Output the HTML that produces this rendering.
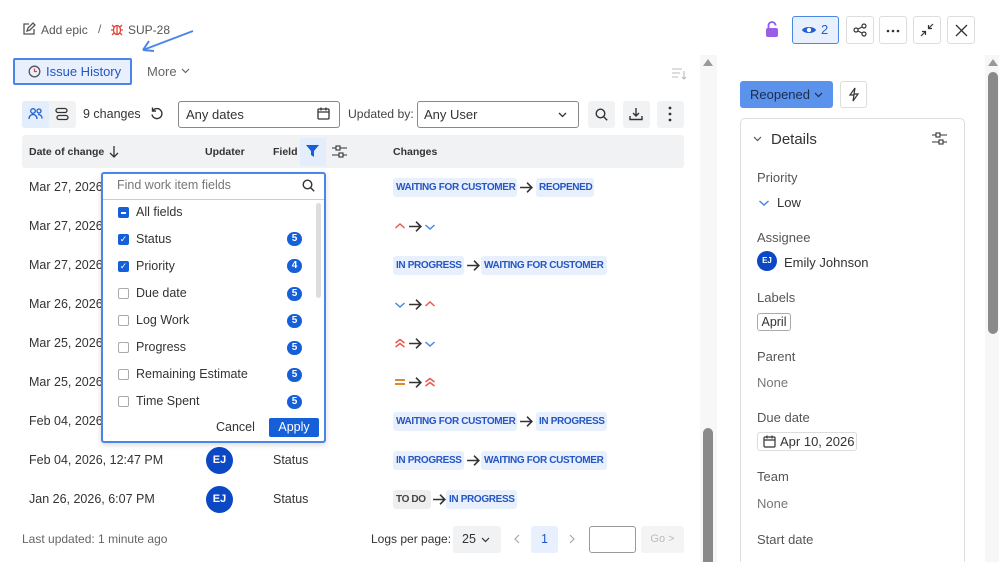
<!DOCTYPE html>
<html><head><meta charset="utf-8"><style>
*{box-sizing:border-box;margin:0;padding:0}
html,body{width:999px;height:562px;overflow:hidden}
body{background:#fff;font-family:"Liberation Sans",Arial,sans-serif;color:#333;position:relative;font-size:12px}
.a{position:absolute}
.tag{position:absolute;background:#e8f0fd;color:#2455c3;font-weight:bold;font-size:10px;letter-spacing:-0.35px;padding:0 3px;height:19px;line-height:19px;border-radius:3px;white-space:nowrap;overflow:hidden}
.tag.g{background:#eee;color:#444}
.arr{position:absolute}
.date{position:absolute;left:29px;font-size:12.5px;color:#333}
.av{position:absolute;width:27px;height:27px;border-radius:50%;background:#0c47c4;color:#fff;font-size:11px;font-weight:bold;text-align:center;line-height:27px}
.it{position:absolute;left:118px;font-size:12.5px;color:#333}
.cb{position:absolute;left:118px;width:11px;height:11px;border:1px solid #aaa;border-radius:2px;background:#fff}
.cb.on{background:#1560d8;border-color:#1560d8}
.bd{position:absolute;left:287px;width:15px;height:14px;border-radius:7px;background:#1560d8;color:#fff;font-size:10px;font-weight:bold;text-align:center;line-height:14px}
.lbl{position:absolute;left:757px;font-size:13px;color:#555}
.val{position:absolute;left:757px;font-size:13px;color:#333}
.btn{position:absolute;border:1px solid #ddd;border-radius:3px;background:#fff;width:27px;height:27px;text-align:center;line-height:25px}
.hd{position:absolute;font-size:10.5px;font-weight:bold;top:146px}
</style></head><body>
<svg width="0" height="0" style="position:absolute"><defs>
<symbol id="ar" viewBox="0 0 14 12"><path d="M1 6h11M7.5 1.5L12 6l-4.5 4.5" fill="none" stroke="#333" stroke-width="1.5"/></symbol>
<symbol id="up" viewBox="0 0 12 8"><path d="M1.5 6L6 2l4.5 4" fill="none" stroke="#e8594f" stroke-width="1.5"/></symbol>
<symbol id="dn" viewBox="0 0 12 8"><path d="M1.5 2L6 6l4.5-4" fill="none" stroke="#4a86e8" stroke-width="1.5"/></symbol>
<symbol id="uu" viewBox="0 0 12 10"><path d="M1.5 5L6 1.5 10.5 5M1.5 9L6 5.5 10.5 9" fill="none" stroke="#e8594f" stroke-width="1.5"/></symbol>
<symbol id="eq" viewBox="0 0 12 10"><path d="M1 3h10M1 7h10" stroke="#e08a2e" stroke-width="2"/></symbol>
</defs></svg>
<!-- breadcrumb -->
<svg class="a" style="left:22px;top:22px" width="14" height="14" viewBox="0 0 14 14"><path d="M7 2H2v10h10V7M5 9l1-3 5-5 2 2-5 5z" fill="none" stroke="#555" stroke-width="1.3"/></svg>
<div class="a" style="left:41px;top:23px;font-size:12px;color:#555">Add epic</div>
<div class="a" style="left:98px;top:22px;font-size:12px;color:#666">/</div>
<svg class="a" style="left:110px;top:22px" width="14" height="14" viewBox="0 0 14 14"><g stroke="#e0443a" stroke-width="1.3" fill="none"><ellipse cx="7" cy="8" rx="3.5" ry="4.5"/><path d="M7 4v8M1 8h2.5M10.5 8H13M2 3l2 2M12 3l-2 2M2 13l2-2M12 13l-2-2"/></g></svg>
<div class="a" style="left:128px;top:23px;font-size:12px;color:#555">SUP-28</div>
<svg class="a" style="left:135px;top:28px" width="62" height="28" viewBox="0 0 62 28"><path d="M58 3L8 22M8 22l11 1M8 22l6-9" fill="none" stroke="#4a86e8" stroke-width="2"/></svg>
<!-- tabs -->
<div class="a" style="left:13px;top:58px;width:119px;height:27px;border:2px solid #4a86e8;border-radius:2px;background:#e8f0fd"></div>
<svg class="a" style="left:28px;top:65px" width="13" height="13" viewBox="0 0 13 13"><circle cx="6.5" cy="6.5" r="5.3" fill="none" stroke="#555" stroke-width="1.3"/><path d="M6.5 3.5v3h2.5" fill="none" stroke="#e0443a" stroke-width="1.2"/></svg>
<div class="a" style="left:46px;top:64px;font-size:13px;color:#2455c3">Issue History</div>
<div class="a" style="left:147px;top:64px;font-size:13px;color:#666">More</div>
<svg class="a" style="left:181px;top:68px" width="9" height="6" viewBox="0 0 9 6"><path d="M1 1l3.5 3.5L8 1" fill="none" stroke="#666" stroke-width="1.2"/></svg>
<svg class="a" style="left:672px;top:68px" width="15" height="12" viewBox="0 0 15 12"><path d="M0 1h10M0 5h8M0 9h6M12 3v8M10 9l2 2 2-2" fill="none" stroke="#bbb" stroke-width="1.1"/></svg>
<!-- toolbar -->
<div class="a" style="left:22px;top:101px;width:54px;height:27px;background:#f1f2f4;border-radius:3px"></div>
<div class="a" style="left:22px;top:101px;width:27px;height:27px;background:#e3edfc;border-radius:3px"></div>
<svg class="a" style="left:28px;top:107px" width="15" height="14" viewBox="0 0 15 14"><g fill="none" stroke="#1f5fd1" stroke-width="1.3"><circle cx="5" cy="4" r="2.3"/><circle cx="11" cy="4" r="2"/><path d="M1 12c0-3 2-4.5 4-4.5s4 1.5 4 4.5M10 7.5c2 0 4 1 4 4"/></g></svg>
<svg class="a" style="left:55px;top:107px" width="14" height="14" viewBox="0 0 14 14"><g fill="none" stroke="#333" stroke-width="1.3"><rect x="1" y="1.5" width="11" height="4" rx="2"/><rect x="2" y="8.5" width="11" height="4" rx="2"/></g></svg>
<div class="a" style="left:83px;top:107px;font-size:12.5px">9 changes</div>
<svg class="a" style="left:150px;top:107px" width="14" height="14" viewBox="0 0 14 14"><path d="M3 3.5A5 5 0 1 1 2 7.5M2.5 0.5v3.5H6" fill="none" stroke="#333" stroke-width="1.4"/></svg>
<div class="a" style="left:178px;top:101px;width:162px;height:27px;border:1px solid #888;border-radius:3px"></div>
<div class="a" style="left:186px;top:107px;font-size:13px">Any dates</div>
<svg class="a" style="left:317px;top:107px" width="13" height="13" viewBox="0 0 13 13"><g fill="none" stroke="#333" stroke-width="1.3"><rect x="1" y="2" width="11" height="10" rx="1"/><path d="M1 5h11M4 0.5v3M9 0.5v3"/></g></svg>
<div class="a" style="left:348px;top:107px;font-size:12.2px;color:#444">Updated by:</div>
<div class="a" style="left:417px;top:101px;width:162px;height:27px;border:1px solid #888;border-radius:3px"></div>
<div class="a" style="left:424px;top:107px;font-size:13px">Any User</div>
<svg class="a" style="left:558px;top:112px" width="9" height="6" viewBox="0 0 9 6"><path d="M1 1l3.5 3.5L8 1" fill="none" stroke="#333" stroke-width="1.3"/></svg>
<div class="a" style="left:588px;top:101px;width:27px;height:27px;background:#f1f2f4;border-radius:3px"></div>
<svg class="a" style="left:595px;top:108px" width="13" height="13" viewBox="0 0 13 13"><circle cx="5.5" cy="5.5" r="4.3" fill="none" stroke="#333" stroke-width="1.4"/><path d="M8.7 8.7l3.5 3.5" stroke="#333" stroke-width="1.4"/></svg>
<div class="a" style="left:623px;top:101px;width:27px;height:27px;background:#f1f2f4;border-radius:3px"></div>
<svg class="a" style="left:629px;top:107px" width="14" height="14" viewBox="0 0 14 14"><path d="M7 1v8M4 6l3 3 3-3M1 9v3.5h12V9" fill="none" stroke="#333" stroke-width="1.4"/></svg>
<div class="a" style="left:657px;top:101px;width:27px;height:27px;background:#f1f2f4;border-radius:3px"></div>
<svg class="a" style="left:668px;top:106px" width="4" height="16" viewBox="0 0 4 16"><circle cx="2" cy="2" r="1.4" fill="#333"/><circle cx="2" cy="8" r="1.4" fill="#333"/><circle cx="2" cy="14" r="1.4" fill="#333"/></svg>
<!-- header -->
<div class="a" style="left:22px;top:135px;width:662px;height:33px;background:#f1f2f4;border-radius:3px"></div>
<div class="hd" style="left:29px">Date of change</div>
<svg class="a" style="left:109px;top:145px" width="10" height="14" viewBox="0 0 10 14"><path d="M5 1v11M1 8l4 4 4-4" fill="none" stroke="#333" stroke-width="1.3"/></svg>
<div class="hd" style="left:205px">Updater</div>
<div class="hd" style="left:273px">Field</div>
<div class="a" style="left:300px;top:138px;width:26px;height:28px;background:#e3edfc"></div>
<svg class="a" style="left:306px;top:145px" width="13" height="12" viewBox="0 0 13 12"><path d="M0 0h13L8 6v6L5 10V6z" fill="#1560d8"/></svg>
<svg class="a" style="left:332px;top:145px" width="15" height="13" viewBox="0 0 15 13"><g fill="none" stroke="#333" stroke-width="1.1"><path d="M0 3h4M8 3h7M0 10h7M11 10h4"/><rect x="4" y="1" width="4" height="4"/><rect x="7" y="8" width="4" height="4"/></g></svg>
<div class="hd" style="left:393px">Changes</div>
<!-- rows -->
<div class="date" style="top:180px">Mar 27, 2026,</div>
<div class="date" style="top:219px">Mar 27, 2026,</div>
<div class="date" style="top:258px">Mar 27, 2026,</div>
<div class="date" style="top:297px">Mar 26, 2026,</div>
<div class="date" style="top:336px">Mar 25, 2026,</div>
<div class="date" style="top:375px">Mar 25, 2026,</div>
<div class="date" style="top:414px">Feb 04, 2026,</div>
<div class="date" style="top:453px">Feb 04, 2026, 12:47 PM</div>
<div class="date" style="top:492px">Jan 26, 2026, 6:07 PM</div>
<div class="av" style="left:206px;top:447px">EJ</div>
<div class="av" style="left:206px;top:486px">EJ</div>
<div class="a" style="left:273px;top:453px;font-size:12.5px">Status</div>
<div class="a" style="left:273px;top:492px;font-size:12.5px">Status</div>

<div class="tag" style="left:393px;top:178px;width:124px">WAITING FOR CUSTOMER</div><svg class="arr" style="left:519px;top:181px" width="15" height="13"><use href="#ar"/></svg><div class="tag" style="left:536px;top:178px;width:58px">REOPENED</div>
<svg class="a" style="left:394px;top:222px" width="12" height="8"><use href="#up"/></svg><svg class="arr" style="left:408px;top:220px" width="15" height="13"><use href="#ar"/></svg><svg class="a" style="left:424px;top:223px" width="12" height="8"><use href="#dn"/></svg>
<div class="tag" style="left:393px;top:256px;width:71px">IN PROGRESS</div><svg class="arr" style="left:466px;top:259px" width="15" height="13"><use href="#ar"/></svg><div class="tag" style="left:481px;top:256px;width:126px">WAITING FOR CUSTOMER</div>
<svg class="a" style="left:394px;top:301px" width="12" height="8"><use href="#dn"/></svg><svg class="arr" style="left:408px;top:298px" width="15" height="13"><use href="#ar"/></svg><svg class="a" style="left:424px;top:300px" width="12" height="8"><use href="#up"/></svg>
<svg class="a" style="left:394px;top:338px" width="12" height="10"><use href="#uu"/></svg><svg class="arr" style="left:408px;top:337px" width="15" height="13"><use href="#ar"/></svg><svg class="a" style="left:424px;top:340px" width="12" height="8"><use href="#dn"/></svg>
<svg class="a" style="left:394px;top:377px" width="12" height="10"><use href="#eq"/></svg><svg class="arr" style="left:408px;top:376px" width="15" height="13"><use href="#ar"/></svg><svg class="a" style="left:424px;top:377px" width="12" height="10"><use href="#uu"/></svg>
<div class="tag" style="left:393px;top:412px;width:124px">WAITING FOR CUSTOMER</div><svg class="arr" style="left:519px;top:415px" width="15" height="13"><use href="#ar"/></svg><div class="tag" style="left:536px;top:412px;width:71px">IN PROGRESS</div>
<div class="tag" style="left:393px;top:451px;width:71px">IN PROGRESS</div><svg class="arr" style="left:466px;top:454px" width="15" height="13"><use href="#ar"/></svg><div class="tag" style="left:481px;top:451px;width:126px">WAITING FOR CUSTOMER</div>
<div class="tag g" style="left:393px;top:490px;width:38px">TO DO</div><svg class="arr" style="left:432px;top:493px" width="15" height="13"><use href="#ar"/></svg><div class="tag" style="left:446px;top:490px;width:71px">IN PROGRESS</div>
<!-- footer -->
<div class="a" style="left:22px;top:532px;font-size:12px;color:#666">Last updated: 1 minute ago</div>
<div class="a" style="left:371px;top:532px;font-size:12px;color:#333">Logs per page:</div>
<div class="a" style="left:453px;top:526px;width:48px;height:27px;background:#f1f2f4;border-radius:3px;padding:6px 9px;font-size:12.5px">25</div>
<svg class="a" style="left:481px;top:537px" width="9" height="6" viewBox="0 0 9 6"><path d="M1 1l3.5 3.5L8 1" fill="none" stroke="#333" stroke-width="1.2"/></svg>
<svg class="a" style="left:514px;top:534px" width="6" height="10" viewBox="0 0 6 10"><path d="M5 1L1 5l4 4" fill="none" stroke="#aaa" stroke-width="1.2"/></svg>
<div class="a" style="left:531px;top:526px;width:27px;height:27px;background:#e8f0fd;border-radius:3px;text-align:center;line-height:27px;color:#2455c3;font-size:12.5px">1</div>
<svg class="a" style="left:569px;top:534px" width="6" height="10" viewBox="0 0 6 10"><path d="M1 1l4 4-4 4" fill="none" stroke="#aaa" stroke-width="1.2"/></svg>
<div class="a" style="left:589px;top:526px;width:47px;height:27px;border:1px solid #999;border-radius:3px"></div>
<div class="a" style="left:641px;top:526px;width:43px;height:27px;background:#f4f4f4;border-radius:3px;text-align:center;line-height:27px;color:#bbb;font-size:11px">Go &gt;</div>
<!-- popup -->
<div class="a" style="left:101px;top:172px;width:225px;height:271px;border:2px solid #4a86e8;border-radius:3px;background:#fff;box-shadow:0 2px 6px rgba(0,0,0,.15)"></div>
<div class="a" style="left:103px;top:199px;width:221px;height:1px;background:#ccc"></div>
<div class="a" style="left:117px;top:178px;font-size:12.5px;color:#777">Find work item fields</div>
<svg class="a" style="left:302px;top:179px" width="13" height="13" viewBox="0 0 13 13"><circle cx="5.5" cy="5.5" r="4.3" fill="none" stroke="#333" stroke-width="1.4"/><path d="M8.7 8.7l3.5 3.5" stroke="#333" stroke-width="1.4"/></svg>
<div class="a" style="left:316px;top:203px;width:5px;height:95px;background:#ddd;border-radius:3px"></div>
<div class="cb on" style="top:207px"><div style="position:absolute;left:2px;top:4px;width:5px;height:1.5px;background:#fff"></div></div><div class="it" style="left:136px;top:205px">All fields</div>
<div class="cb on" style="top:234px;color:#fff;font-size:9px;line-height:9px;text-align:center">✓</div><div class="it" style="left:136px;top:232px">Status</div><div class="bd" style="top:232px">5</div>
<div class="cb on" style="top:261px;color:#fff;font-size:9px;line-height:9px;text-align:center">✓</div><div class="it" style="left:136px;top:259px">Priority</div><div class="bd" style="top:259px">4</div>
<div class="cb" style="top:288px"></div><div class="it" style="left:136px;top:286px">Due date</div><div class="bd" style="top:287px">5</div>
<div class="cb" style="top:315px"></div><div class="it" style="left:136px;top:313px">Log Work</div><div class="bd" style="top:314px">5</div>
<div class="cb" style="top:342px"></div><div class="it" style="left:136px;top:340px">Progress</div><div class="bd" style="top:341px">5</div>
<div class="cb" style="top:369px"></div><div class="it" style="left:136px;top:367px">Remaining Estimate</div><div class="bd" style="top:368px">5</div>
<div class="cb" style="top:396px"></div><div class="it" style="left:136px;top:394px">Time Spent</div><div class="bd" style="top:395px">5</div>
<div class="a" style="left:216px;top:420px;font-size:12.5px">Cancel</div>
<div class="a" style="left:269px;top:418px;width:50px;height:19px;background:#1560d8;border-radius:2px;color:#fff;text-align:center;line-height:19px;font-size:12.5px">Apply</div>
<!-- scrollbars -->
<div class="a" style="left:700px;top:55px;width:17px;height:507px;background:#f7f7f7"></div>
<div class="a" style="left:703px;top:59px;width:0;height:0;border-left:5px solid transparent;border-right:5px solid transparent;border-bottom:7px solid #999"></div>
<div class="a" style="left:703px;top:428px;width:10px;height:134px;background:#8a8a8a;border-radius:5px 5px 0 0"></div>
<div class="a" style="left:985px;top:55px;width:14px;height:507px;background:#f7f7f7"></div>
<div class="a" style="left:988px;top:59px;width:0;height:0;border-left:5px solid transparent;border-right:5px solid transparent;border-bottom:7px solid #999"></div>
<div class="a" style="left:988px;top:72px;width:10px;height:262px;background:#8a8a8a;border-radius:5px"></div>
<!-- top right buttons -->
<svg class="a" style="left:765px;top:21px" width="14" height="17" viewBox="0 0 14 17"><path d="M3.5 7V4.5a3.5 3.5 0 0 1 7 0" fill="none" stroke="#8b5cf6" stroke-width="1.8"/><rect x="1" y="7" width="12" height="9" rx="2" fill="#9b5ee6"/></svg>
<div class="a" style="left:792px;top:16px;width:47px;height:28px;border:1px solid #4a86e8;border-radius:3px;background:#e8f0fd"></div>
<svg class="a" style="left:801px;top:24px" width="16" height="12" viewBox="0 0 16 12"><path d="M1 6c2-4 12-4 14 0-2 4-12 4-14 0z" fill="#1f5fd1"/><circle cx="8" cy="6" r="2.2" fill="#fff"/></svg>
<div class="a" style="left:821px;top:22px;font-size:13px;color:#1f5fd1">2</div>
<div class="btn" style="left:846px;top:16px;width:28px;height:28px"><svg width="14" height="14" viewBox="0 0 14 14" style="margin-top:6px"><g fill="none" stroke="#333" stroke-width="1.2"><circle cx="3" cy="7" r="2"/><circle cx="11" cy="3" r="2"/><circle cx="11" cy="11" r="2"/><path d="M5 6l4-2M5 8l4 2"/></g></svg></div>
<div class="btn" style="left:879px;top:16px;width:28px;height:28px"><svg width="14" height="4" viewBox="0 0 14 4" style="margin-top:11px"><circle cx="2" cy="2" r="1.3" fill="#333"/><circle cx="7" cy="2" r="1.3" fill="#333"/><circle cx="12" cy="2" r="1.3" fill="#333"/></svg></div>
<div class="btn" style="left:913px;top:16px;width:28px;height:28px"><svg width="14" height="14" viewBox="0 0 14 14" style="margin-top:6px"><path d="M1 13l4.5-4.5M2 8.5h3.5V12M13 1L8.5 5.5M8.5 2v3.5H12" fill="none" stroke="#333" stroke-width="1.2"/></svg></div>
<div class="btn" style="left:947px;top:16px;width:28px;height:28px"><svg width="13" height="13" viewBox="0 0 13 13" style="margin-top:7px"><path d="M1 1l11 11M12 1L1 12" stroke="#333" stroke-width="1.3"/></svg></div>
<!-- right panel -->
<div class="a" style="left:740px;top:81px;width:93px;height:27px;background:#5b93ec;border-radius:3px;color:#1c2b4a;font-size:13px;line-height:27px;padding-left:10px">Reopened</div>
<svg class="a" style="left:814px;top:92px" width="9" height="6" viewBox="0 0 9 6"><path d="M1 1l3.5 3.5L8 1" fill="none" stroke="#1c2b4a" stroke-width="1.2"/></svg>
<div class="btn" style="left:840px;top:81px"><svg width="12" height="15" viewBox="0 0 12 15" style="margin-top:5px"><path d="M7 1L2 8h4l-1 6 5-7H6z" fill="none" stroke="#333" stroke-width="1.2"/></svg></div>
<div class="a" style="left:740px;top:118px;width:225px;height:444px;border:1px solid #ddd;border-bottom:none;border-radius:5px 5px 0 0"></div>
<svg class="a" style="left:753px;top:136px" width="9" height="6" viewBox="0 0 9 6"><path d="M1 1l3.5 3.5L8 1" fill="none" stroke="#555" stroke-width="1.2"/></svg>
<div class="a" style="left:771px;top:131px;font-size:15px;color:#333">Details</div>
<svg class="a" style="left:932px;top:132px" width="15" height="13" viewBox="0 0 15 13"><g fill="none" stroke="#333" stroke-width="1.1"><path d="M0 3h4M8 3h7M0 10h7M11 10h4"/><rect x="4" y="1" width="4" height="4"/><rect x="7" y="8" width="4" height="4"/></g></svg>
<div class="lbl" style="top:170px">Priority</div>
<svg class="a" style="left:758px;top:199px" width="12" height="8"><use href="#dn"/></svg><div class="val" style="left:777px;top:195px">Low</div>
<div class="lbl" style="top:230px">Assignee</div>
<div class="a" style="left:757px;top:251px;width:20px;height:20px;border-radius:50%;background:#0c47c4;color:#fff;font-size:8px;font-weight:bold;text-align:center;line-height:20px">EJ</div>
<div class="val" style="left:784px;top:255px">Emily Johnson</div>
<div class="lbl" style="top:290px">Labels</div>
<div class="a" style="left:757px;top:313px;width:34px;height:18px;border:1px solid #aaa;border-radius:3px;font-size:12.5px;text-align:center;line-height:16px">April</div>
<div class="lbl" style="top:349px">Parent</div>
<div class="val" style="top:375px;color:#777">None</div>
<div class="lbl" style="top:410px">Due date</div>
<div class="a" style="left:757px;top:432px;width:100px;height:19px;border:1px solid #ddd;border-radius:3px"></div>
<svg class="a" style="left:763px;top:435px" width="13" height="13" viewBox="0 0 13 13"><g fill="none" stroke="#333" stroke-width="1.2"><rect x="1" y="2" width="11" height="10" rx="1"/><path d="M1 5h11M4 0.5v3M9 0.5v3"/></g></svg>
<div class="val" style="left:780px;top:434px">Apr 10, 2026</div>
<div class="lbl" style="top:469px">Team</div>
<div class="val" style="top:496px;color:#777">None</div>
<div class="lbl" style="top:532px">Start date</div>
</body></html>
